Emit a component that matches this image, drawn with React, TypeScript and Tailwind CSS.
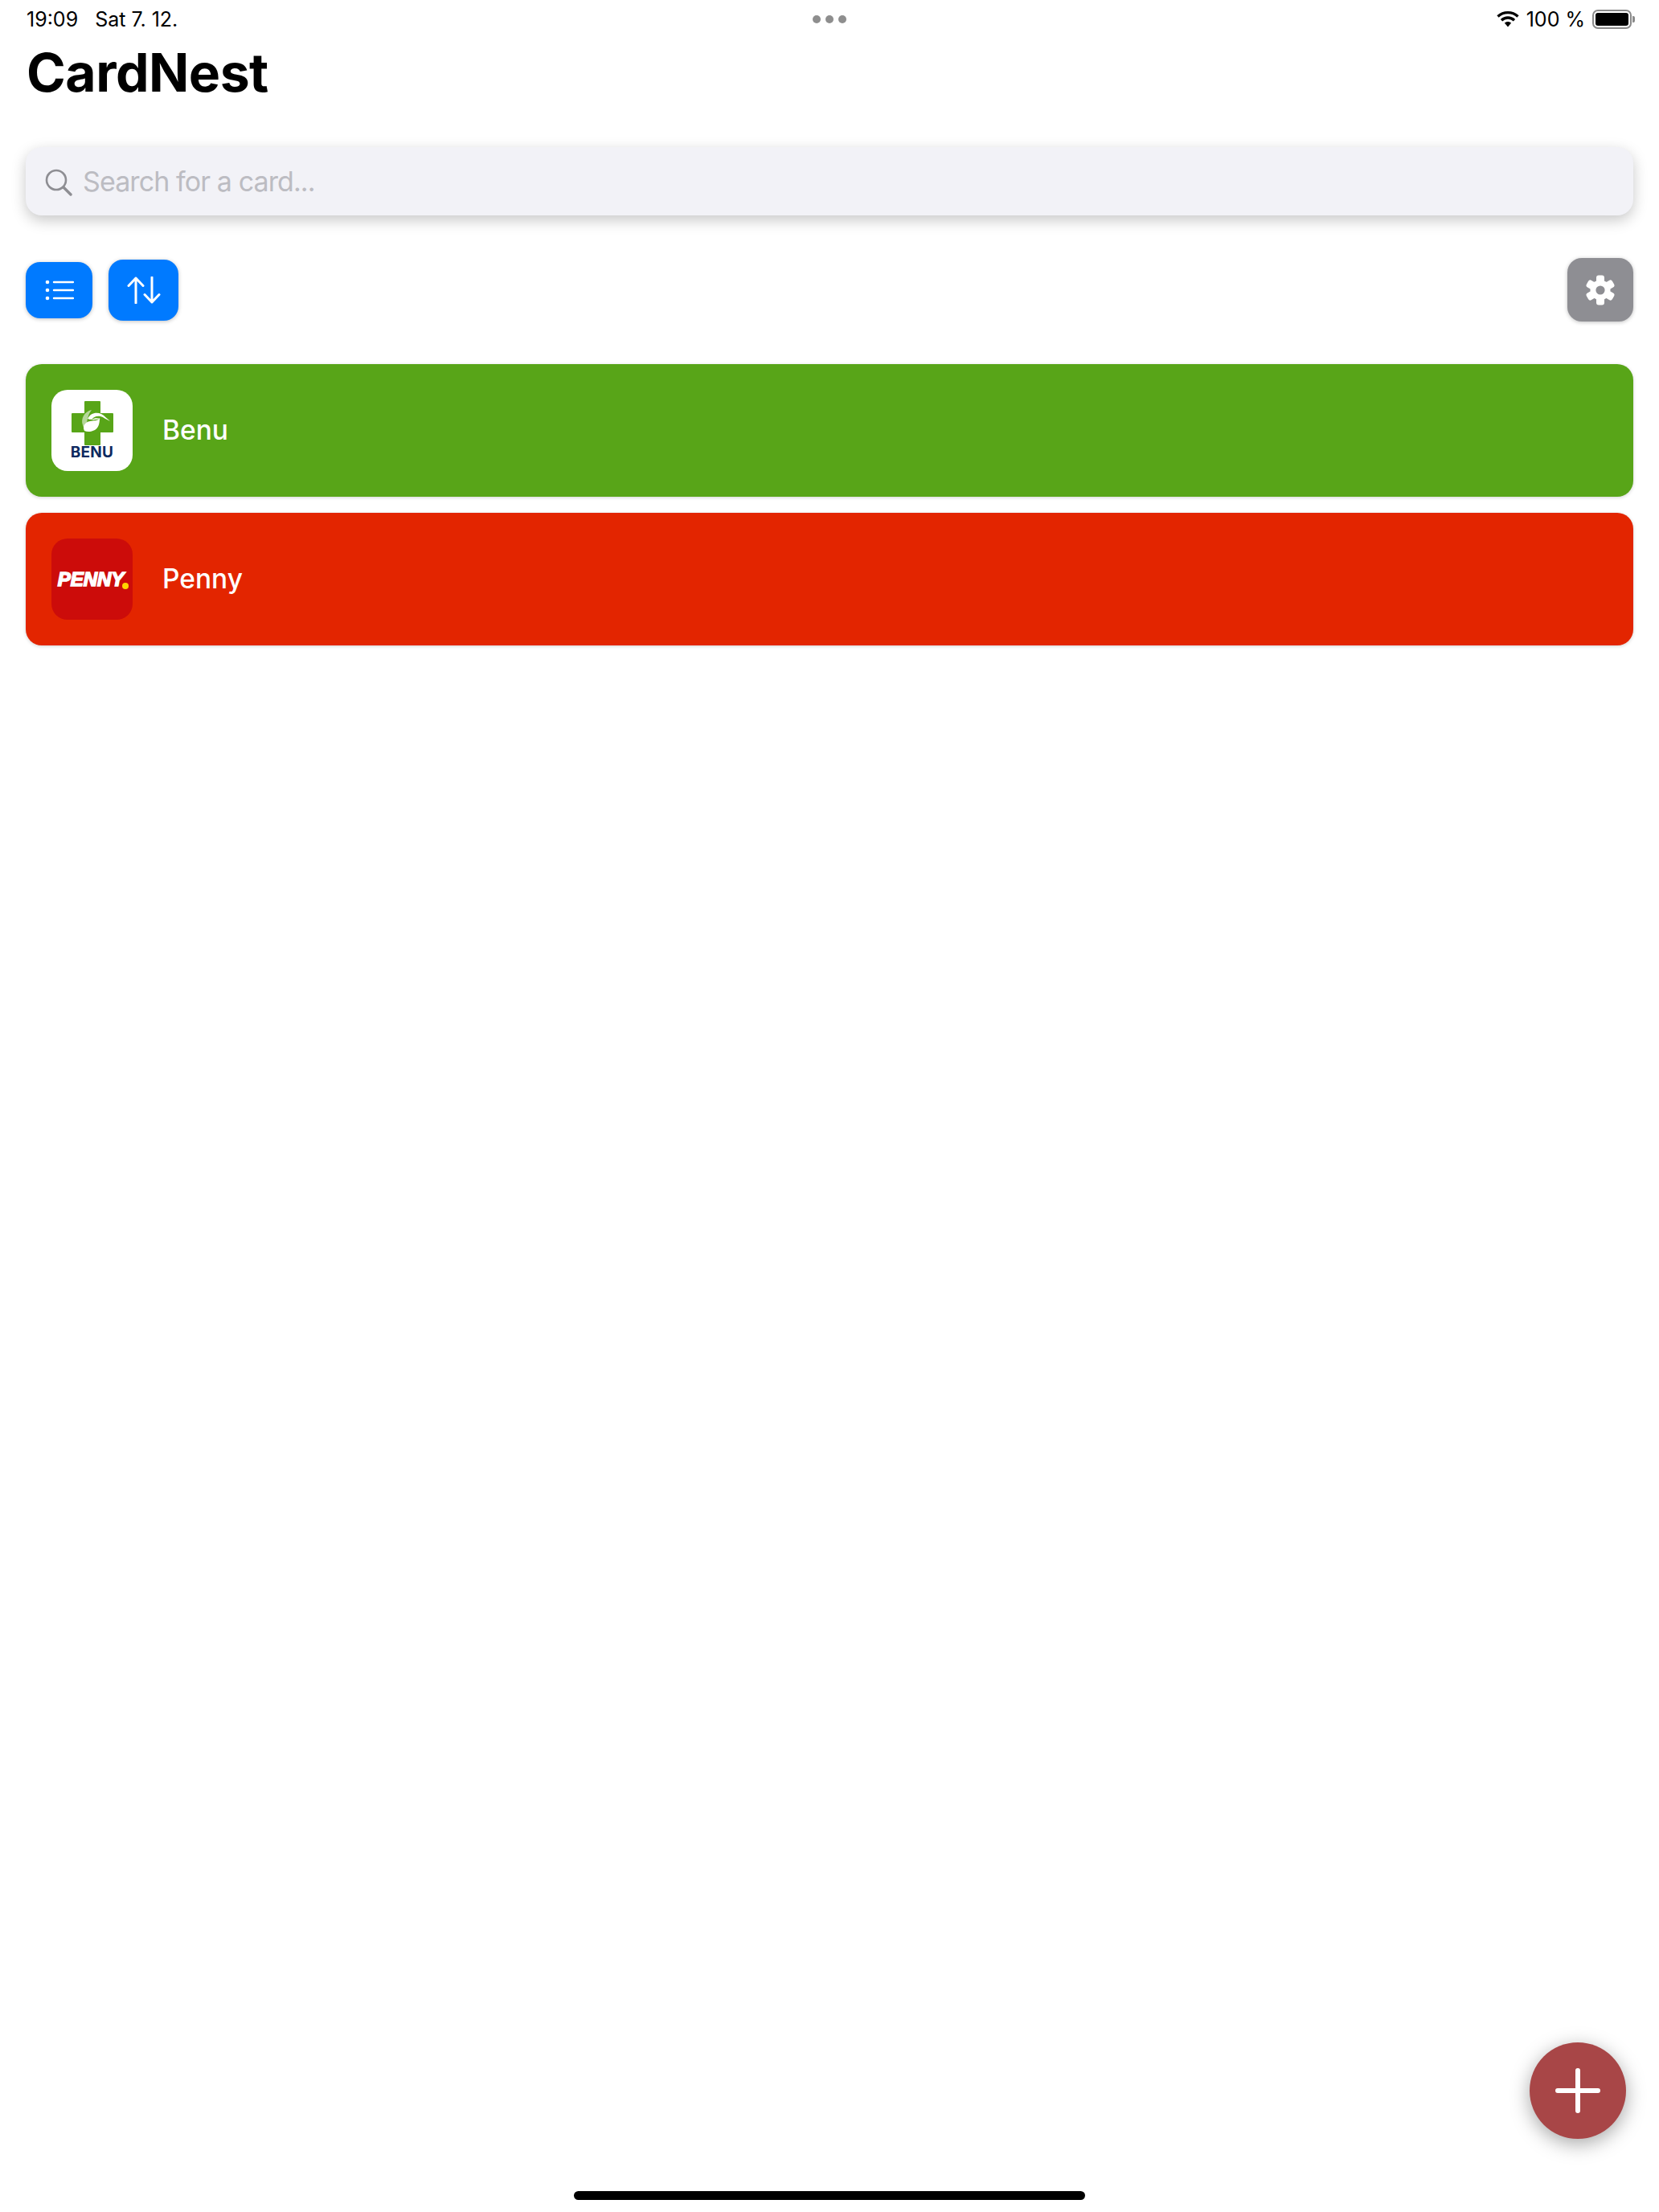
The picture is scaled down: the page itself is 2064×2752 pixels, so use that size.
import React from "react";

const inter = "font-['Inter','Liberation_Sans',sans-serif]";

function Wifi() {
  return (
    <svg width="28" height="22" viewBox="0 0 28 22" fill="none">
      <path d="M1.5 7.5C8.5 1 19.5 1 26.5 7.5" stroke="#000" strokeWidth="3.4" strokeLinecap="butt" />
      <path d="M6 12.2C10.6 8 17.4 8 22 12.2" stroke="#000" strokeWidth="3.4" strokeLinecap="butt" />
      <path d="M9.8 15.6L14 20.5L18.2 15.6C15.8 13.4 12.2 13.4 9.8 15.6Z" fill="#000" />
    </svg>
  );
}

function Battery() {
  return (
    <div className="flex items-center gap-[1px]">
      <div className="w-[49px] h-[24px] rounded-[7px] border-2 border-[#8a8a8a] p-[2px]">
        <div className="w-full h-full rounded-[3px] bg-black" />
      </div>
      <div className="w-[3px] h-[8px] rounded-r-[2px] bg-[#8a8a8a]" />
    </div>
  );
}

function Gear() {
  return (
    <svg width="38" height="38" viewBox="0 0 38 38">
      <g fill="#fff">
        <circle cx="19" cy="19" r="12.5" />
        {[0, 60, 120, 180, 240, 300].map((a) => (
          <rect key={a} x="14" y="0.5" width="10" height="11" rx="3" transform={`rotate(${a} 19 19)`} />
        ))}
      </g>
      <circle cx="19" cy="19" r="5.6" fill="#8e8e93" />
    </svg>
  );
}

function BenuLogo() {
  return (
    <div className="w-[101px] h-[101px] rounded-[20px] bg-white flex flex-col items-center pt-[14px] shrink-0">
      <svg width="52" height="55" viewBox="0 0 52 55" className="shrink-0">
        <path d="M16 1a1 1 0 0 1 1-1h18a1 1 0 0 1 1 1v14h15a1 1 0 0 1 1 1v22a1 1 0 0 1-1 1H36v15a1 1 0 0 1-1 1H17a1 1 0 0 1-1-1V39H1a1 1 0 0 1-1-1V16a1 1 0 0 1 1-1h15z" fill="#58a518" />
        <path d="M14 30C11 22 16 13 25 11C21 16 19 23 19 30L16 35Z" fill="#b5d79a" />
        <path d="M16 37C13 31 17 26 23 25C27 24 33 25 35 21C35 27 34 33 29 36C25 38 20 39 16 37Z" fill="#fff" />
        <path d="M20 22C23 15 31 13 37 16C41 18 44 22 48 25C43 23 40 20 36 19C31 18 27 20 25 23C28 21 33 21 36 22C31 23 25 24 20 22Z" fill="#fff" />
      </svg>
      <span className="font-['Inter','Liberation_Sans',sans-serif] font-bold text-[19px] leading-[15px] tracking-[0.2px] text-[#0e2a60] mt-[1px]">
        BENU
      </span>
    </div>
  );
}

function PennyLogo() {
  return (
    <div className="w-[101px] h-[101px] rounded-[20px] bg-[#cc0c0a] flex items-center justify-center shrink-0">
      <div className="relative flex items-center pr-[3px]">
        <span className="font-['Liberation_Sans',sans-serif] italic font-bold text-[24px] leading-[20px] text-white [-webkit-text-stroke:1.6px_white]">
          PENNY
        </span>
        <span className="absolute right-[-3px] bottom-[-2px] w-[8px] h-[8px] rounded-full bg-[#ffd500]" />
      </div>
    </div>
  );
}

function Card({ name, color, logo }: { name: string; color: string; logo: React.ReactNode }) {
  return (
    <div className={`h-[165px] rounded-[20px] ${color} flex items-center pl-[32px] gap-[37px] shadow-[0_1px_4px_rgba(0,0,0,0.18)]`}>
      {logo}
      <span className="text-white text-[33.5px] font-medium leading-none">{name}</span>
    </div>
  );
}

export default function App() {
  return (
    <div className={`${inter} relative h-[2752px] bg-white text-black flex flex-col overflow-hidden`}>
      {/* status bar */}
      <div className="grid grid-cols-3 items-center px-[32px] h-[46px] pt-[2px] text-[25px] leading-none">
        <div className="flex gap-[21px] pl-[1px]">
          <span>19:09</span>
          <span>Sat 7. 12.</span>
        </div>
        <div className="flex justify-center gap-[6px]">
          <span className="w-[10px] h-[10px] rounded-full bg-[#8e8e8e]" />
          <span className="w-[10px] h-[10px] rounded-full bg-[#8e8e8e]" />
          <span className="w-[10px] h-[10px] rounded-full bg-[#8e8e8e]" />
        </div>
        <div className="flex justify-end items-center gap-[9px] mr-[-2px]">
          <Wifi />
          <span>100 %</span>
          <Battery />
        </div>
      </div>

      <div className="px-[32px] flex flex-col flex-1">
        <h1 className="text-[66px] font-bold leading-[72px] tracking-[-0.5px] mt-[8px] ml-[1px]">CardNest</h1>

        {/* search */}
        <div className="mt-[57px] h-[85px] rounded-[20px] bg-[#f2f2f7] flex items-center pl-[24px] gap-[13px] shadow-[0_6px_18px_rgba(0,0,0,0.22)]">
          <svg width="34" height="34" viewBox="0 0 34 34" fill="none" className="mt-[3px]">
            <circle cx="14" cy="14" r="12" stroke="#8e8e93" strokeWidth="2.6" />
            <path d="M23 23L32 32" stroke="#8e8e93" strokeWidth="3.4" strokeLinecap="round" />
          </svg>
          <span className="text-[34px] tracking-[-0.9px] text-[#bcbcc2] leading-none">Search for a card...</span>
        </div>

        {/* toolbar */}
        <div className="mt-[53px] h-[79px] flex items-center">
          <button className="w-[83px] h-[70px] rounded-[18px] bg-[#007aff] flex items-center justify-center shadow-[0_1px_5px_rgba(0,0,0,0.25)]">
            <svg width="36" height="26" viewBox="0 0 36 26" fill="none">
              <circle cx="3" cy="3" r="2.3" fill="#fff" />
              <circle cx="3" cy="13" r="2.3" fill="#fff" />
              <circle cx="3" cy="23" r="2.3" fill="#fff" />
              <path d="M11 3H35M11 13H35M11 23H35" stroke="#fff" strokeWidth="2.4" strokeLinecap="round" />
            </svg>
          </button>
          <button className="ml-[20px] w-[87px] h-[76px] rounded-[18px] bg-[#007aff] flex items-center justify-center shadow-[0_1px_5px_rgba(0,0,0,0.25)]">
            <svg width="42" height="34" viewBox="0 0 42 34" fill="none">
              <path d="M11 33V2M2 11.5L11 2L20 11.5" stroke="#fff" strokeWidth="3" strokeLinecap="round" strokeLinejoin="round" />
              <path d="M31 1V32M22 22.5L31 32L40 22.5" stroke="#fff" strokeWidth="3" strokeLinecap="round" strokeLinejoin="round" />
            </svg>
          </button>
          <button className="ml-auto w-[82px] h-[79px] rounded-[18px] bg-[#8e8e93] flex items-center justify-center shadow-[0_1px_5px_rgba(0,0,0,0.25)]">
            <Gear />
          </button>
        </div>

        {/* cards */}
        <div className="mt-[53px] flex flex-col gap-[20px]">
          <Card name="Benu" color="bg-[#58a518]" logo={<BenuLogo />} />
          <Card name="Penny" color="bg-[#e32500]" logo={<PennyLogo />} />
        </div>

        {/* home indicator */}
        <div className="mt-auto mb-[15px] flex justify-center">
          <div className="w-[636px] h-[11px] rounded-full bg-black" />
        </div>
      </div>

      {/* floating action button */}
      <button className="absolute left-[1903px] top-[2541px] w-[120px] h-[120px] rounded-full bg-[#a84647] flex items-center justify-center shadow-[0_6px_24px_rgba(0,0,0,0.35)]">
        <svg width="56" height="56" viewBox="0 0 56 56" fill="none">
          <path d="M28 3V53M3 28H53" stroke="#fff" strokeWidth="6" strokeLinecap="round" />
        </svg>
      </button>
    </div>
  );
}
